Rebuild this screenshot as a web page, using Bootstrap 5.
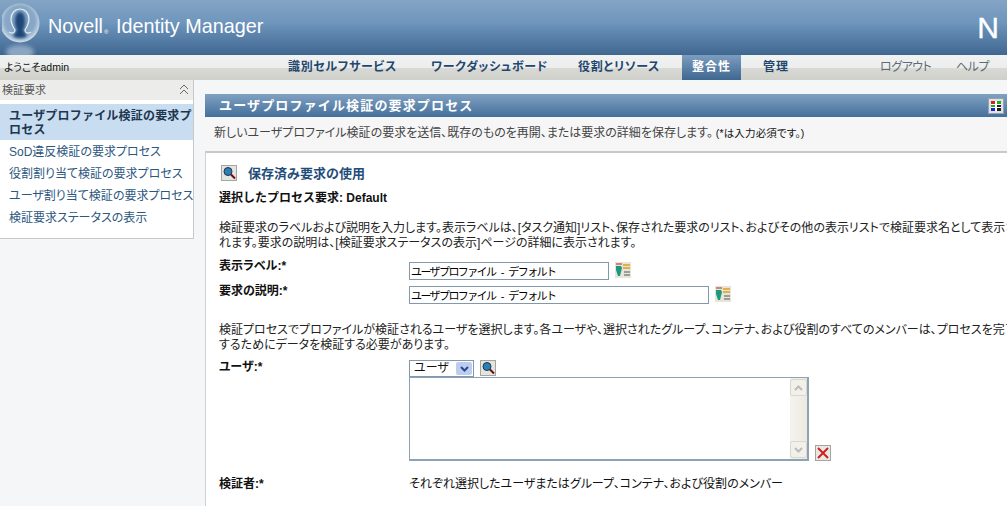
<!DOCTYPE html>
<html lang="ja"><head><meta charset="utf-8"><title>Novell Identity Manager</title>
<link href="https://cdn.jsdelivr.net/npm/bootstrap@5.3.0/dist/css/bootstrap.min.css" rel="stylesheet">
<style>
html,body{height:506px;overflow:hidden}
body{background:#f5f6f7;font:12px/15px "Liberation Sans","Noto Sans CJK JP",sans-serif;color:#111;width:1007px;font-feature-settings:"palt"}
.top-band{height:55px;background:linear-gradient(#84a4c4,#6f96bd 40%,#3f6790);padding-left:2px}
.brand-txt{color:#fff;font:19.8px/24px "Liberation Sans","Noto Sans CJK JP",sans-serif;margin-left:4px;margin-top:14px}
.brand-txt sup{font-size:6px;top:0;vertical-align:-1px;margin:0 2px 0 1px}
.corner-n{color:#fff;font:400 30px/30px "Liberation Sans",sans-serif;margin:13px 8px 0 0;-webkit-text-stroke:.4px #fff}
.menu-band{height:25px;background:linear-gradient(#f1f3f2 0,#eceeed 50%,#d9dad5 52%,#cfd0ca 100%)}
.hello{font-size:10.5px;line-height:24px;padding-left:4px;width:288px}
.menu-link{font-weight:700;color:#23466f;text-decoration:none;line-height:25px;white-space:nowrap;letter-spacing:.65px}
.menu-on{background:linear-gradient(#7c9dbf,#3f6790);color:#fff;width:59px;text-align:center;margin-left:22px;margin-right:22px;letter-spacing:1px}
.menu-wide{letter-spacing:1px}
.out-link{color:#5e6a75;font-weight:400;line-height:25px;text-decoration:none;letter-spacing:-.5px}
.side-col{width:194px;height:159px;background:#fff;border-right:1px solid #c8c8c8;border-bottom:1px solid #c8c8c8;flex:none}
.side-head{height:20px;background:#ececea;color:#555;font-size:11px;line-height:20px;padding:0 4px 0 2px;margin-bottom:4px}
.side-list .list-group-item{border:0;background:transparent;padding:5px 0 0 9px;color:#2c5780;font-size:12px;line-height:15px;height:22px;white-space:nowrap;border-radius:0}
.side-list .list-group-item.side-on{background:#c9ddf1;height:36px;padding:5px 0 0 9px;white-space:normal;font-weight:700;color:#20364f;line-height:14px;font-feature-settings:normal;letter-spacing:.2px}
.main-col{margin:14px 0 0 11px;width:802px;flex:none}
.title-band{height:23px;background:linear-gradient(#80a1c2,#44709b);color:#fff;font-weight:700;font-size:13px;line-height:23px;padding-left:14px;letter-spacing:1.15px;font-feature-settings:normal}
.grid-btn{width:16px;height:16px;background:#dfe3e6;border:1px solid #9aa3ab;margin-right:3px;padding:2px}
.desc-band{height:36px;padding:9px 0 0 9px;color:#444;background:#f6f6f6;white-space:nowrap;border-bottom:2px solid #c9c9c9}
.desc-band span{font-size:10.5px;color:#111;margin-left:3px;letter-spacing:.15px}
.body-panel{background:#fff;border-left:1px solid #d0d0d0;height:356px;padding:12px 0 0 13px;white-space:nowrap;overflow:hidden}
.tool-ico{display:block;flex:none}
.saved-h{color:#1f4d7a;font-weight:700;margin-left:11px;font-feature-settings:normal;font-size:13px}
.sel-h{font-weight:700;margin-top:10px;line-height:15px;font-feature-settings:normal}
.info-p{margin:14px 0 0;line-height:15px;color:#222}
.lbl-c{width:190px;flex:none;font-weight:700;color:#111;margin-top:-3px}
.fld-in{height:18px;border:1px solid #8399ab;background:#fff;padding:0 2px 0 1px;font:11px/16px "Liberation Sans","Noto Sans CJK JP",sans-serif;letter-spacing:-1.6px;word-spacing:4px;color:#000;border-radius:0;box-shadow:none}
.w-s{width:200px}.w-l{width:300px}
.pick-sel{width:65px;height:17px;border:1px solid #8399ab;font-size:12px;line-height:15px;padding-left:4px;background:#fff}
.pick-arrow{width:16px;height:13px;background:#bccdf0;border-radius:2px;margin:1px}
.big-box{width:400px;height:84px;border:2px solid #8da2b4;border-width:1px 2px 2px 1px;background:#fff;padding:0}
.fake-bar{width:17px;background:linear-gradient(90deg,#f4f4ee,#ece9e0);padding:1px 0}
.bar-btn{height:17px;background:#f1f1ea;border:1px solid #d8d8cf;border-radius:2px}
</style></head>
<body>
<header class="top-band d-flex justify-content-between">
 <div class="d-flex">
  <svg width="42" height="55" viewBox="0 0 42 55"><defs><radialGradient id="g" cx=".5" cy=".45" r=".55"><stop offset="0" stop-color="#7f9fc2"/><stop offset=".7" stop-color="#8aa9c8"/><stop offset="1" stop-color="#d4e0ea"/></radialGradient><filter id="b"><feGaussianBlur stdDeviation="1.500"/></filter><filter id="c"><feGaussianBlur stdDeviation="2"/></filter></defs><ellipse cx="18" cy="52" rx="14" ry="7" fill="#8ba6c2" filter="url(#c)"/><circle cx="18" cy="23" r="19.500" fill="url(#g)"/><path d="M18 12c4 0 5 5 5 10 0 4-1 6-2 8l4 6c-4 3-10 3-14 0l4-6c-1-2-2-4-2-8 0-5 1-10 5-10z" fill="#1f4677" filter="url(#b)"/><path d="M7 32c3 2 6 1 6-2-2-3-4-6-4-11 0-6 4-10 9-10s9 4 9 10c0 5-2 8-4 11 0 3 3 4 6 2" fill="none" stroke="#e4edf4" stroke-width="1.200"/></svg>
  <div class="brand-txt">Novell<sup>®</sup> Identity Manager</div>
 </div>
 <div class="corner-n">N</div>
</header>
<nav class="menu-band d-flex">
 <div class="hello">ようこそadmin</div>
 <a class="menu-link" style="width:143px" href="#">識別セルフサービス</a>
 <a class="menu-link" style="width:147px" href="#">ワークダッシュボード</a>
 <a class="menu-link" style="width:82px" href="#">役割とリソース</a>
 <a class="menu-link menu-on" href="#">整合性</a>
 <a class="menu-link menu-wide" style="width:117px" href="#">管理</a>
 <a class="out-link" style="width:76px" href="#">ログアウト</a>
 <a class="out-link" href="#">ヘルプ</a>
</nav>
<div class="d-flex">
 <aside class="side-col">
  <div class="side-head d-flex justify-content-between"><span>検証要求</span><svg width="10" height="20" viewBox="0 0 10 20"><path d="M1 9l4-4 4 4M1 14l4-4 4 4" fill="none" stroke="#667" stroke-width="1"/></svg></div>
  <div class="list-group side-list">
   <a class="list-group-item side-on" href="#">ユーザプロファイル検証の要求プロセス</a>
   <a class="list-group-item" href="#">SoD違反検証の要求プロセス</a>
   <a class="list-group-item" href="#">役割割り当て検証の要求プロセス</a>
   <a class="list-group-item" href="#">ユーザ割り当て検証の要求プロセス</a>
   <a class="list-group-item" href="#">検証要求ステータスの表示</a>
  </div>
 </aside>
 <main class="main-col">
  <div class="title-band d-flex justify-content-between align-items-center"><span>ユーザプロファイル検証の要求プロセス</span>
   <svg class="grid-btn" viewBox="0 0 10 10"><rect width="10" height="10" fill="#fff"/><path d="M0 0h4v3H0z" fill="#c22"/><path d="M6 0h4v3H6z" fill="#2a2"/><path d="M0 4h4v2H0z" fill="#2a2"/><path d="M6 4h4v2H6z" fill="#222"/><path d="M0 7h4v3H0z" fill="#22c"/><path d="M6 7h4v3H6z" fill="#222"/></svg></div>
  <div class="desc-band">新しいユーザプロファイル検証の要求を送信、既存のものを再開、または要求の詳細を保存します。<span>(*は入力必須です。)</span></div>
  <div class="body-panel">
   <div class="d-flex align-items-center">
    <svg class="tool-ico" style="margin-left:2px" width="16" height="16" viewBox="0 0 16 16"><rect x=".5" y=".5" width="15" height="15" fill="#e4e4e0" stroke="#a4a4a0"/><circle cx="7" cy="6.500" r="4" fill="#2a7fb8" stroke="#234"/><path d="M10 9.500l4 4" stroke="#611" stroke-width="2"/></svg>
    <span class="saved-h">保存済み要求の使用</span>
   </div>
   <div class="sel-h">選択したプロセス要求: Default</div>
   <p class="info-p" style="margin-top:15px">検証要求のラベルおよび説明を入力します。表示ラベルは、[タスク通知]リスト、保存された要求のリスト、およびその他の表示リストで検証要求名として表示さ<br>れます。要求の説明は、[検証要求ステータスの表示]ページの詳細に表示されます。</p>
   <div class="d-flex" style="margin-top:11px">
    <div class="lbl-c">表示ラベル:*</div><input class="fld-in w-s" value="ユーザプロファイル - デフォルト" aria-label="表示ラベル">
    <svg class="tool-ico" style="margin-left:6px" width="16" height="16" viewBox="0 0 16 16"><rect width="16" height="16" fill="#e8e4d8"/><path d="M1 4h5l1 2-2 8H3L1 8z" fill="#1a9a80"/><path d="M1 2h6" stroke="#b22"/><path d="M8 3h7M8 6h7" stroke="#d9a020" stroke-width="1.500"/><path d="M9 10h6M9 13h6" stroke="#555"/></svg>
   </div>
   <div class="d-flex" style="margin-top:6px">
    <div class="lbl-c" style="margin-top:-2px">要求の説明:*</div><input class="fld-in w-l" value="ユーザプロファイル - デフォルト" aria-label="要求の説明">
    <svg class="tool-ico" style="margin-left:6px" width="16" height="16" viewBox="0 0 16 16"><rect width="16" height="16" fill="#e8e4d8"/><path d="M1 4h5l1 2-2 8H3L1 8z" fill="#1a9a80"/><path d="M1 2h6" stroke="#b22"/><path d="M8 3h7M8 6h7" stroke="#d9a020" stroke-width="1.500"/><path d="M9 10h6M9 13h6" stroke="#555"/></svg>
   </div>
   <p class="info-p" style="margin-top:19px">検証プロセスでプロファイルが検証されるユーザを選択します。各ユーザや、選択されたグループ、コンテナ、および役割のすべてのメンバーは、プロセスを完了<br>するためにデータを検証する必要があります。</p>
   <div class="d-flex" style="margin-top:7px">
    <div class="lbl-c" style="margin-top:0">ユーザ:*</div>
    <div>
     <div class="d-flex align-items-start">
      <div class="pick-sel d-flex justify-content-between align-items-center"><span>ユーザ</span><span class="pick-arrow d-flex align-items-center justify-content-center"><svg width="9" height="6" viewBox="0 0 9 6"><path d="M1 1l3.500 3.500L8 1" fill="none" stroke="#2a4a8a" stroke-width="2"/></svg></span></div>
      <svg class="tool-ico" style="margin-left:6px" width="16" height="16" viewBox="0 0 16 16"><rect x=".5" y=".5" width="15" height="15" fill="#e4e4e0" stroke="#a4a4a0"/><circle cx="7" cy="6.500" r="4" fill="#2a7fb8" stroke="#234"/><path d="M10 9.500l4 4" stroke="#611" stroke-width="2"/></svg>
     </div>
     <div class="d-flex align-items-end">
      <div class="big-box d-flex justify-content-end"><div class="fake-bar d-flex flex-column justify-content-between"><div class="bar-btn d-flex align-items-center justify-content-center"><svg width="9" height="6" viewBox="0 0 9 6"><path d="M1 5l3.500-3.500L8 5" fill="none" stroke="#bbb" stroke-width="2"/></svg></div><div class="bar-btn d-flex align-items-center justify-content-center"><svg width="9" height="6" viewBox="0 0 9 6"><path d="M1 1l3.500 3.500L8 1" fill="none" stroke="#bbb" stroke-width="2"/></svg></div></div></div>
      <svg class="tool-ico" style="margin-left:6px" width="16" height="16" viewBox="0 0 16 16"><rect x=".5" y=".5" width="15" height="15" fill="#e8e8e4" stroke="#a4a4a0"/><path d="M3 3l10 10M13 3L3 13" stroke="#d02020" stroke-width="2"/></svg>
     </div>
    </div>
   </div>
   <div class="d-flex" style="margin-top:16px"><div class="lbl-c" style="margin-top:0">検証者:*</div><div>それぞれ選択したユーザまたはグループ、コンテナ、および役割のメンバー</div></div>
  </div>
 </main>
</div>
</body></html>
